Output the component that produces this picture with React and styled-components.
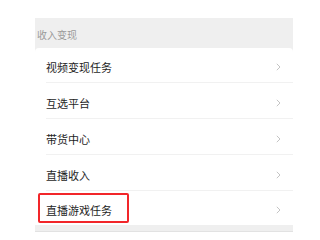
import React from 'react';
import styled, { createGlobalStyle } from 'styled-components';

const GlobalStyle = createGlobalStyle`
  html, body {
    margin: 0;
    padding: 0;
    background: #ffffff;
    font-family: "Noto Sans CJK SC", "Noto Sans", sans-serif;
  }
`;

const Page = styled.div`
  width: 303px;
  height: 238px;
  padding: 18px 10px 0 35px;
  box-sizing: border-box;
  overflow: hidden;
`;

const Panel = styled.div`
  background: #efefef;
  padding-bottom: 6px;
  border-bottom: 1px solid #e2e2e2;
`;

const SectionTitle = styled.div`
  height: 30px;
  display: flex;
  align-items: flex-end;
  padding: 0 0 7px 2px;
  box-sizing: border-box;
  font-size: 10px;
  line-height: 12px;
  color: #9a9a9a;
`;

const Card = styled.div`
  background: #ffffff;
  border-radius: 4px 4px 0 0;
`;

const Row = styled.div`
  position: relative;
  height: ${(p) => p.height || 36}px;
  display: flex;
  align-items: center;
  justify-content: space-between;
  padding: 3px 12px 0 11px;
  box-sizing: border-box;
  &::after {
    content: '';
    display: ${(p) => (p.last ? 'none' : 'block')};
    position: absolute;
    left: 11px;
    right: 0;
    bottom: 0;
    height: 1px;
    background: #f1f1f1;
  }
`;

const Label = styled.span`
  font-size: 11px;
  line-height: 14px;
  color: #1e1e1e;
`;

const Highlight = styled.div`
  position: absolute;
  left: 3px;
  top: 2px;
  width: 91px;
  height: 30px;
  border: 2px solid #f2262a;
  border-radius: 2px;
  box-sizing: border-box;
`;

const Chevron = () => (
  <svg width="5" height="8" viewBox="0 0 5 8">
    <path d="M0.8 0.8 L4 4 L0.8 7.2" fill="none" stroke="#bdbdbd" strokeWidth="0.9" />
  </svg>
);

const items = ['视频变现任务', '互选平台', '带货中心', '直播收入', '直播游戏任务'];

function App() {
  return (
    <Page>
      <GlobalStyle />
      <Panel>
        <SectionTitle>收入变现</SectionTitle>
        <Card>
          {items.map((item, idx) => {
            const last = idx === items.length - 1;
            return (
              <Row key={item} last={last} height={idx === 0 ? 35 : last ? 34 : 36}>
                {last && <Highlight />}
                <Label>{item}</Label>
                <Chevron />
              </Row>
            );
          })}
        </Card>
      </Panel>
    </Page>
  );
}

export default App;
